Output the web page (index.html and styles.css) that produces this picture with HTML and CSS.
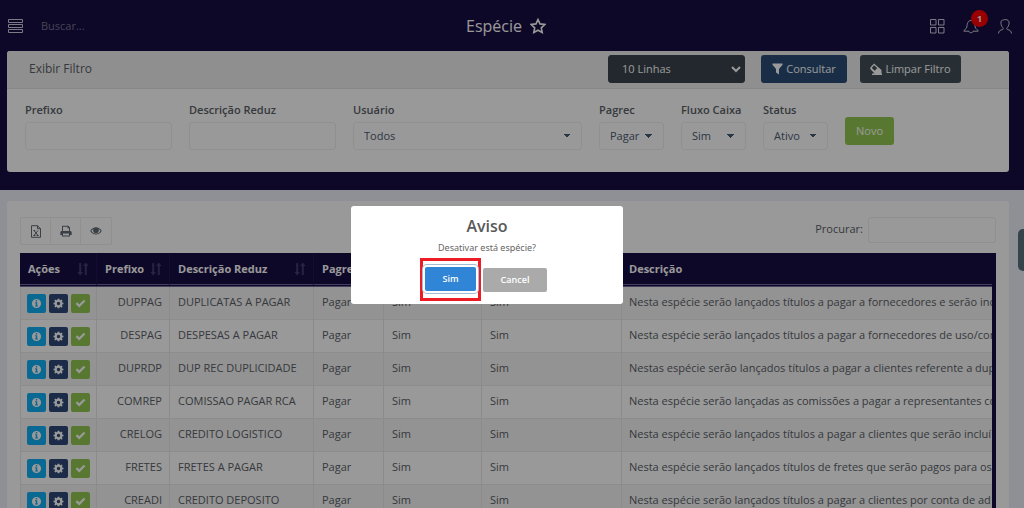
FILE: index.html
```
<!DOCTYPE html>
<html lang="pt-BR">
<head>
<meta charset="utf-8">
<title>Espécie</title>
<link rel="stylesheet" href="styles.css">
<script src="app.js" defer></script>
</head>
<body>
<svg class="defs" aria-hidden="true">
  <symbol id="i-sort" viewBox="0 0 12 14"><path d="M2.200 1h2v9H6L3.200 13.500.4 10h1.800zM7.800 13h2V4h1.800L8.800.5 6 4h1.800z"/></symbol>
  <symbol id="i-info" viewBox="0 0 12 12"><path fill-rule="evenodd" d="M6 1a5 5 0 1 1 0 10A5 5 0 0 1 6 1zM5.200 2.300v1.500h1.600V2.300zM4.400 4.700v1h.8v2.600h-.8v1h3.200v-1h-.8V4.700z"/></symbol>
  <symbol id="i-gear" viewBox="0 0 12 12"><path fill-rule="evenodd" d="M5 .8h2l.3 1.400.8.350L9.300 1.700l1.200 1.200-.8 1.200.4.900 1.300.2v1.700l-1.400.3-.3.800.8 1.200-1.200 1.300-1.300-.9-.7.300-.3 1.400H5l-.3-1.400-.8-.3-1.200.8-1.300-1.200.9-1.300-.4-.8L.6 6.900V5.200L2 4.900l.3-.8-.9-1.200 1.300-1.200 1.200.8.800-.3zM6 4.200a1.800 1.800 0 1 0 0 3.700 1.800 1.800 0 0 0 0-3.700z"/></symbol>
  <symbol id="i-check" viewBox="0 0 12 12"><path d="M.7 6.500 2.400 4.700l2.200 2.100 5-5 1.700 1.700-6.700 6.800z"/></symbol>
</svg>

<div class="app">
  <header class="topbar">
    <div class="left">
      <button class="icon-btn" aria-label="Menu"><svg width="16" height="14" viewBox="0 0 16 14"><path d="M1.500.5h14v3h-14zM1.500 5.500h14v3h-14zM1.500 10.500h14v3h-14z"/></svg></button>
      <input class="search" type="text" placeholder="Buscar..." aria-label="Buscar">
    </div>
    <h1>Espécie <svg width="16" height="16" viewBox="0 0 16 16"><path d="m8 1.500 2 4.400 4.800.6-3.500 3.300.9 4.700L8 12.200l-4.200 2.300.9-4.700L1.200 6.500 6 5.900z"/></svg></h1>
    <div class="right">
      <button class="icon-btn" aria-label="Aplicativos"><svg width="16" height="16" viewBox="0 0 16 16"><path d="M1.500 1.500h5.500v5.500h-5.500zM9.500 1.500h5.500v5.500h-5.500zM1.500 9.500h5.500v5.500h-5.500zM9.500 9.500h5.500v5.500h-5.500z"/></svg></button>
      <button class="icon-btn" aria-label="Notificações"><svg width="16" height="16" viewBox="0 0 16 16"><path d="M6 13.200H.8c0-1.400 2.400-1.600 3-4.200C4.400 5.500 4.600 2.500 8 2.500s3.600 3 4.200 6.500c.6 2.600 3 2.800 3 4.200H10M5.800 13.200c.4 2 4 2 4.400 0"/></svg><span class="badge">1</span></button>
      <button class="icon-btn" aria-label="Usuário"><svg width="16" height="16" viewBox="0 0 16 16"><path d="M1.500 15.500c.2-2.600 1.500-3.300 4.200-4 .8-.3.600-1.200 0-1.900C4.200 8 3.700 5.500 4 3.800 4.300 2.300 5.500 2 6.500 2c1-.8 5-.7 5.500 1.800.3 1.700-.2 4.200-1.700 5.800-.6.7-.8 1.600 0 1.900 2.700.7 4 1.400 4.200 4"/></svg></button>
    </div>
  </header>

  <section class="panel filter">
    <div class="filter-head">
      <span class="filter-title">Exibir Filtro</span>
      <select class="lines" aria-label="Linhas"><option>10 Linhas</option></select>
      <button class="btn navy"><svg width="11" height="12" viewBox="0 0 11 12"><path d="M.5.5h10v1.300L7 6v5.500L4 9.500V6L.5 1.800z"/></svg>Consultar</button>
      <button class="btn dark"><svg width="12" height="12" viewBox="0 0 12 12"><path fill-rule="evenodd" d="M4 .5 11.500 7v3.500H12V12H2v-1.500h2.500L.3 6V4.500zM4 2.300 1.800 5l3 2.800L7.200 5z"/></svg>Limpar Filtro</button>
    </div>
    <form class="fields">
      <label class="field text">Prefixo<input type="text"></label>
      <label class="field text">Descrição Reduz<input type="text"></label>
      <label class="field wide">Usuário<select><option>Todos</option></select></label>
      <label class="field small">Pagrec<select><option>Pagar</option></select></label>
      <label class="field small">Fluxo Caixa<select><option>Sim</option></select></label>
      <label class="field small">Status<select><option>Ativo</option></select></label>
      <button type="button" class="btn green">Novo</button>
    </form>
  </section>

  <main class="panel list">
    <div class="tools">
      <div class="group">
        <button aria-label="Excel"><svg width="12" height="13" viewBox="0 0 12 13"><path class="line" d="M1.500.7h6l3 3v8.600h-9zM7.500.7v3h3M4 5.500l4 5M8 5.500l-4 5M3.500 10.500h2M6.700 10.500h2M3.500 5.500h1.700"/></svg></button>
        <button aria-label="Imprimir"><svg width="12" height="12" viewBox="0 0 12 12"><path fill-rule="evenodd" d="M2 6V.8h6.300L10 2.500V6c1 0 1.700.5 1.700 1.500V10H10v1.500H2V10H.3V7.500C.3 6.500 1 6 2 6zM3 1.800V6h6V3.300H7.500V1.800zM3 8.500v2h6v-2z"/></svg></button>
        <button aria-label="Visualizar"><svg width="12" height="10" viewBox="0 0 12 10"><path fill-rule="evenodd" d="M.2 5C3 0 9 0 11.800 5 9 9.800 3 9.800.2 5zM1.400 5c1 1.600 2.600 2.800 4.600 2.800S9.600 6.600 10.600 5C10 4 9.300 3.300 8.400 2.800 9.600 5 8.200 7.300 6 7.300S2.400 5 3.600 2.800C2.700 3.300 2 4 1.400 5z"/><circle cx="6" cy="4.500" r="2"/></svg></button>
      </div>
      <label class="find">Procurar:<input type="text"></label>
    </div>
    <div class="table-wrap">
      <table>
        <colgroup><col class="c1"><col class="c2"><col class="c3"><col class="c4"><col class="c5"><col class="c6"><col></colgroup>
        <thead><tr>
          <th>Ações<svg><use href="#i-sort"/></svg></th>
          <th>Prefixo<svg><use href="#i-sort"/></svg></th>
          <th>Descrição Reduz<svg><use href="#i-sort"/></svg></th>
          <th>Pagrec</th><th></th><th></th><th>Descrição</th>
        </tr></thead>
        <tbody id="rows"></tbody>
      </table>
    </div>
  </main>
  <button class="side-tab" aria-label="Abrir painel"></button>
</div>

<div class="overlay">
  <div class="dialog" role="dialog" aria-labelledby="dlg-title">
    <h2 id="dlg-title">Aviso</h2>
    <p>Desativar está espécie?</p>
    <div class="actions">
      <span class="mark"><button class="ok">Sim</button></span>
      <button class="cancel">Cancel</button>
    </div>
  </div>
</div>
</body>
</html>
```
FILE: styles.css
```
* { box-sizing: border-box; }
body {
  margin: 0;
  font: 11px/18px "Open Sans", "Noto Sans", sans-serif;
  color: #5a6066;
  background: #edf0f8;
}
button, input, select { font: inherit; color: inherit; }
button { border: 0; padding: 0; background: none; }
.defs { position: absolute; width: 0; height: 0; }
.app {
  position: relative;
  height: 100vh;
  overflow: hidden;
  padding: 0 15px 0 7px;
  background: linear-gradient(#170d44 190px, #edf0f8 190px);
}

.topbar {
  display: grid;
  grid-template-columns: 1fr auto 1fr;
  align-items: center;
  height: 51px;
  margin-right: -4px;
  color: #fff;
}
.left, .right { display: flex; align-items: center; }
.right { justify-content: flex-end; gap: 18px; }
.icon-btn { display: flex; position: relative; }
.topbar svg { fill: none; stroke: #cfcdda; stroke-width: 1; }
.search {
  width: 200px;
  margin-left: 16px;
  border: 0;
  background: none;
}
.search::placeholder { color: #77718f; }
h1 {
  display: flex;
  align-items: center;
  gap: 8px;
  margin: 0 8px 0 0;
  font-size: 16px;
  font-weight: 400;
}
.topbar h1 svg { stroke: #fff; stroke-width: 1.6; }
.badge {
  position: absolute;
  left: 8px;
  top: -8px;
  width: 17px;
  height: 17px;
  border-radius: 50%;
  background: #f00;
  font: 700 9px/17px "Open Sans", sans-serif;
}

.panel { background: #fff; border-radius: 3px; }
.filter-head {
  display: flex;
  align-items: center;
  height: 38px;
  padding: 0 48px 2px 22px;
  background: #eee;
  border-bottom: 1px solid #e2e2e2;
  border-radius: 3px 3px 0 0;
}
.filter-title { margin-right: auto; font-size: 12px; }
.btn {
  display: flex;
  align-items: center;
  justify-content: center;
  gap: 3px;
  height: 28px;
  border-radius: 3px;
  color: #fff;
  fill: #fff;
}
.navy { width: 86px; margin: 0 13px 0 16px; background: #2a4d75; }
.dark { width: 101px; background: #444f58; }
.green { width: 49px; margin-top: 16px; background: #93c952; }
.lines {
  width: 137px;
  height: 28px;
  padding: 0 0 0 9px;
  border: 1px solid #3a444d;
  border-radius: 3px;
  background: #3a444d;
  color: #fff;
}

.fields {
  display: flex;
  align-items: flex-start;
  gap: 17px;
  min-height: 83px;
  padding: 12px 18px 0;
}
.field {
  display: flex;
  flex-direction: column;
  gap: 3px;
  font-weight: 600;
}
.field input, .field select {
  width: 100%;
  height: 28px;
  border: 1px solid #f0f0f0;
  border-radius: 3px;
  background: #fff;
  font-weight: 400;
}
.field select {
  appearance: none;
  padding: 0 10px;
  color: #4b5a70;
  background:
    linear-gradient(to bottom right, #435a76 50%, transparent 50%) right 10px center / 4px 4px no-repeat,
    linear-gradient(to bottom left, #435a76 50%, transparent 50%) right 14px center / 4px 4px no-repeat,
    #fff;
}
.text { width: 147px; }
.wide { width: 229px; }
.small { width: 65px; white-space: nowrap; }

.list { margin-top: 29px; padding: 16px 13px 0; }
.tools { display: flex; justify-content: space-between; height: 36px; }
.group { display: flex; height: 28px; border: 1px solid #eee; border-radius: 2px; }
.group button {
  display: flex;
  align-items: center;
  justify-content: center;
  width: 30px;
  border-right: 1px solid #eee;
  fill: #626b73;
}
.group button:last-child { border-right: 0; }
.line { fill: none; stroke: #626b73; }
.find { display: flex; gap: 5px; line-height: 24px; }
.find input {
  width: 128px;
  height: 26px;
  border: 1px solid #eee;
  border-radius: 3px;
  background: #fff;
}

.table-wrap { overflow: hidden; border-right: 4px solid #170d44; }
table {
  width: 100%;
  table-layout: fixed;
  border-collapse: separate;
  border-spacing: 0;
}
.c1 { width: 77px; }
.c2 { width: 73px; }
.c3 { width: 144px; }
.c4 { width: 70px; }
.c5 { width: 98px; }
.c6 { width: 140px; }
th {
  height: 34px;
  padding: 0 7px 0 8px;
  text-align: left;
  font-weight: 700;
  color: #fff;
  background: #170d44;
  border-right: 1px solid #21145c;
  border-bottom: 3px double #75699f;
  white-space: nowrap;
}
th:last-child { border-right: 0; padding-left: 7px; }
th svg { float: right; width: 12px; height: 14px; margin-top: 2px; fill: #443b6c; }
td {
  height: 33px;
  padding: 0 7px 2px 8px;
  border-right: 1px solid #e8e8e8;
  border-bottom: 1px solid #eaeaea;
  white-space: nowrap;
  overflow: hidden;
}
td:first-child { border-left: 1px solid #e8e8e8; padding: 0 6px; }
td:nth-child(2) { text-align: right; }
td:last-child { border-right: 0; padding: 0 0 2px 7px; }
tbody tr:nth-child(odd) { background: #f5f5f5; }
.acts { display: flex; gap: 3px; }
.acts button {
  display: flex;
  align-items: center;
  justify-content: center;
  width: 19px;
  height: 19px;
  border-radius: 2px;
  fill: #fff;
}
.acts svg { width: 11px; height: 11px; }
.acts .info { background: #10b0f4; }
.acts .gear { background: #2d4878; }
.acts .check { background: #93c952; }

.side-tab {
  position: absolute;
  right: 0;
  top: 229px;
  width: 6px;
  height: 42px;
  border-radius: 5px 0 0 5px;
  background: #59707c;
}

.overlay {
  position: fixed;
  inset: 0;
  display: flex;
  align-items: center;
  justify-content: center;
  padding: 2px 50px 0 0;
  background: rgba(0, 0, 0, .4);
}
.dialog {
  width: 272px;
  padding: 9px 0 3px;
  border-radius: 3px;
  background: #fff;
  text-align: center;
}
h2 { margin: 0; font-size: 16px; line-height: 22px; font-weight: 600; color: #595959; }
p { margin: 0; font: 9px/21px "Noto Sans", sans-serif; color: #666; }
.actions {
  display: flex;
  align-items: center;
  justify-content: center;
  gap: 2px;
  margin-right: 7px;
}
.actions button { height: 24px; border-radius: 2px; font-size: 9px; font-weight: 600; color: #fff; }
.mark { display: flex; padding: 6px 2px 7px; border: 3px solid #ed1c24; }
.ok { width: 51px; background: #3085d6; box-shadow: 0 0 0 2px #fff, 0 0 0 3px #a5bdd6; }
.cancel { width: 64px; background: #aaa; }
```
FILE: app.js
```
const rows = [
  ["DUPPAG", "DUPLICATAS A PAGAR", "Nesta espécie serão lançados títulos a pagar a fornecedores e serão incl"],
  ["DESPAG", "DESPESAS A PAGAR", "Nesta espécie serão lançados títulos a pagar a fornecedores de uso/con"],
  ["DUPRDP", "DUP REC DUPLICIDADE", "Nestas espécie serão lançados títulos a pagar a clientes referente a dupl"],
  ["COMREP", "COMISSAO PAGAR RCA", "Nesta espécie serão lançadas as comissões a pagar a representantes co"],
  ["CRELOG", "CREDITO LOGISTICO", "Nesta espécie serão lançados títulos a pagar a clientes que serão incluí"],
  ["FRETES", "FRETES A PAGAR", "Nesta espécie serão lançados títulos de fretes que serão pagos para os"],
  ["CREADI", "CREDITO DEPOSITO", "Nesta espécie serão lançados títulos a pagar a clientes por conta de ad"]
];
const action = (name, label) =>
  `<button class="${name}" aria-label="${label}"><svg><use href="#i-${name}"/></svg></button>`;
document.getElementById("rows").innerHTML = rows.map(([code, name, text]) => `
  <tr>
    <td><div class="acts">${action("info", "Informações")}${action("gear", "Configurar")}${action("check", "Ativar")}</div></td>
    <td>${code}</td><td>${name}</td><td>Pagar</td><td>Sim</td><td>Sim</td><td>${text}</td>
  </tr>`).join("");
```
